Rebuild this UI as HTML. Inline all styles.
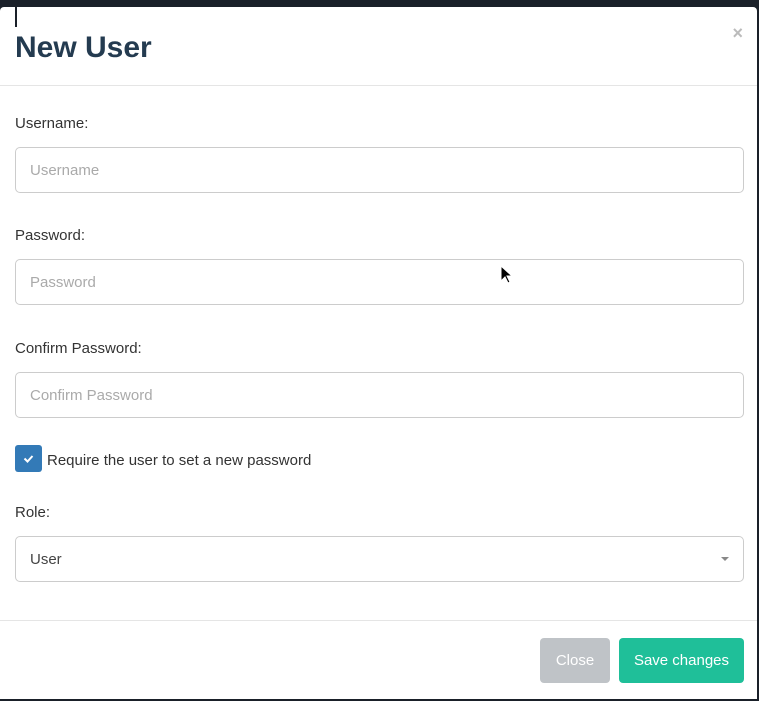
<!DOCTYPE html>
<html><head><style>
body{margin:0;width:759px;height:701px;background:#1a2029;font-family:"Liberation Sans",sans-serif;position:relative;overflow:hidden}
.m{position:absolute;left:0;top:7px;width:757px;height:692px;background:#fff;border-radius:4px 4px 0 0}
.a{position:absolute}
.t{left:15px;top:24px;font-size:30px;font-weight:bold;color:#243b50;margin:0}
.x{right:14px;top:16px;color:#bbb;font-size:18px;font-weight:bold}
.hr{left:0;width:757px;height:1px;background:#e5e5e5}
.l{left:15px;font-size:15px;color:#333}
.i{left:15px;width:727px;height:44px;border:1px solid #ccc;border-radius:5px;font-size:15px;color:#aaa;line-height:46px;text-indent:14px;box-sizing:content-box}
.cb{left:15px;top:438px;width:27px;height:27px;background:#337ab7;border-radius:3px}
.b{top:631px;height:45px;border-radius:4px;color:#fff;font-size:15px;line-height:46px;text-align:center}
</style></head><body>
<div class="a" style="left:15px;top:7px;width:2px;height:20px;background:#1a2029;z-index:2"></div>
<div class="m">
<div class="a t">New User</div>
<div class="a x">×</div>
<div class="a hr" style="top:78px"></div>
<div class="a l" style="top:108px">Username:</div>
<div class="a i" style="top:140px">Username</div>
<div class="a l" style="top:220px">Password:</div>
<div class="a i" style="top:252px">Password</div>
<div class="a l" style="top:333px">Confirm Password:</div>
<div class="a i" style="top:365px">Confirm Password</div>
<div class="a cb"><svg width="27" height="27"><path d="M9.5 13.5l3 3 5-5.5" stroke="#fff" stroke-width="2" fill="none"/></svg></div>
<div class="a l" style="left:47px;top:445px">Require the user to set a new password</div>
<div class="a l" style="top:497px">Role:</div>
<div class="a i" style="top:529px;color:#444">User<span style="position:absolute;right:14px;top:20px;width:0;height:0;border-left:4px solid transparent;border-right:4px solid transparent;border-top:4px solid #888"></span></div>
<div class="a hr" style="top:613px"></div>
<div class="a b" style="left:540px;width:70px;background:#bfc3c7">Close</div>
<div class="a b" style="left:619px;width:125px;background:#1fbf99">Save changes</div>
</div>
<svg class="a" style="left:500px;top:265px" width="14" height="20"><path d="M1 1v15l4-4 3 6 2-1-3-6h5z" fill="#000" stroke="#fff" stroke-width="1"/></svg>
</body></html>
